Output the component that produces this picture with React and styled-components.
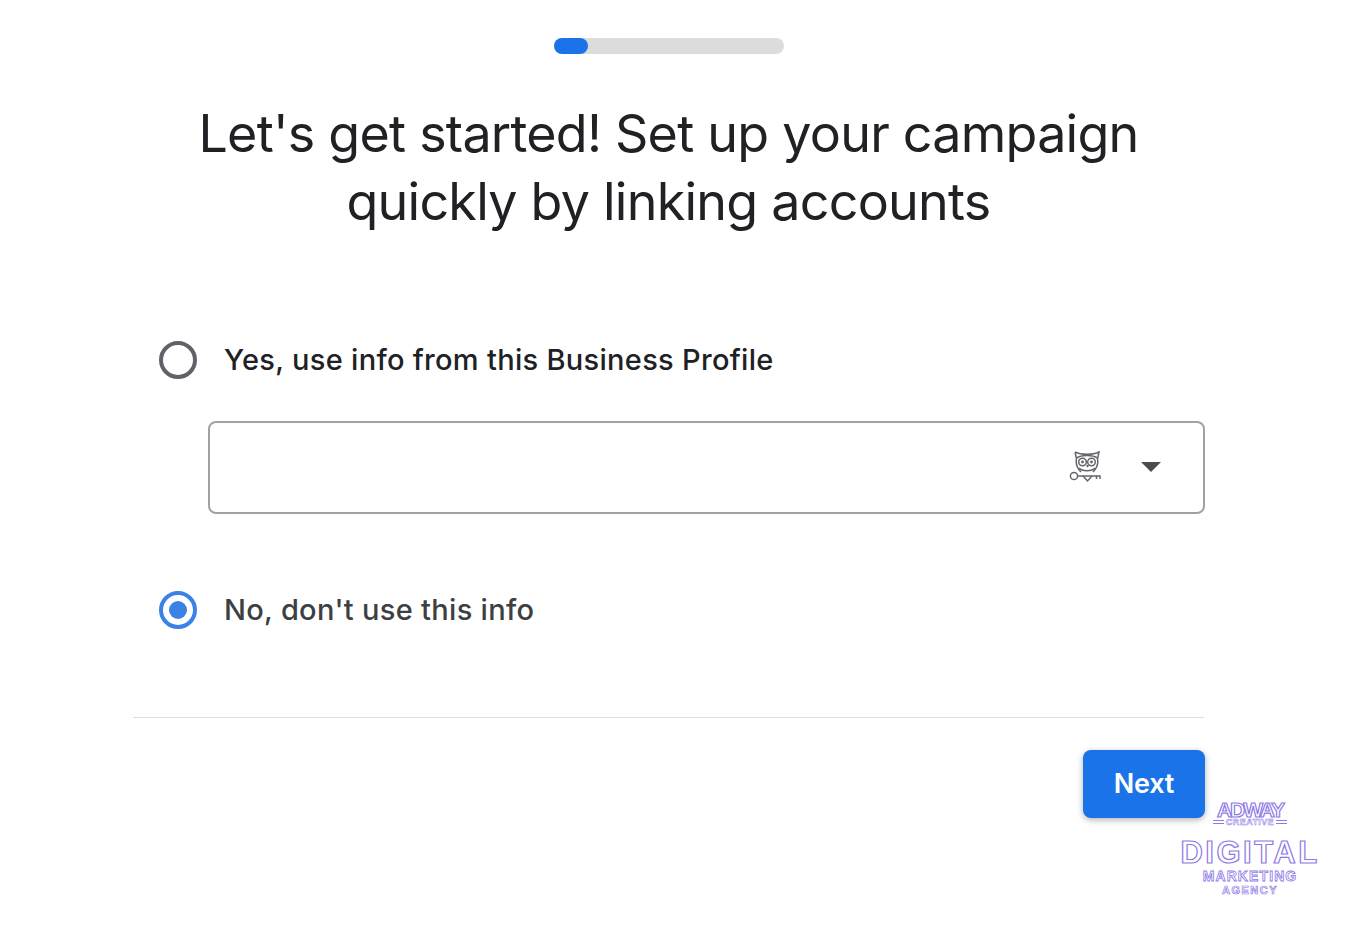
import styled, { createGlobalStyle } from "styled-components"

const Global = createGlobalStyle`
    html, body {
        margin: 0;
        background: #fff;
    }
`;

const Page = styled.div`
    position: relative;
    width: 1369px;
    height: 930px;
    overflow: hidden;
    box-sizing: border-box;
    padding: 38px 165px 0 133px;
    font-family: Inter, "Open Sans", sans-serif;
    background: #fff;
`;

const Track = styled.div`
    width: 230px;
    height: 16px;
    margin: 0 auto;
    border-radius: 8px;
    background: #dadcdd;
`;

const Fill = styled.div`
    height: 100%;
    border-radius: 8px;
    background: #1a73e8;
`;

const Title = styled.h1`
    margin: 46px 0 0;
    font-size: 52px;
    font-weight: 400;
    line-height: 68px;
    letter-spacing: -0.75px;
    text-align: center;
    color: #202124;
`;

const Form = styled.div`
    margin-top: 104px;
    padding-left: 26px;
`;

const Option = styled.div`
    display: flex;
    align-items: center;
    gap: 27px;
    height: 40px;
`;

const Radio = styled.span`
    box-sizing: border-box;
    display: flex;
    align-items: center;
    justify-content: center;
    width: 38px;
    height: 38px;
    border-radius: 50%;
    border: 4px solid ${p => (p.$checked ? "#3b82e6" : "#5f6368")};
`;

const Dot = styled.span`
    width: 18px;
    height: 18px;
    border-radius: 50%;
    background: #3b82e6;
`;

const Label = styled.span`
    padding-bottom: 2px;
    font-size: 29px;
    font-weight: 500;
    letter-spacing: 0.3px;
    color: ${p => (p.$dark ? "#202124" : "#3c4043")};
`;

const Select = styled.div`
    box-sizing: border-box;
    display: flex;
    align-items: center;
    justify-content: flex-end;
    gap: 40px;
    width: 997px;
    height: 93px;
    margin: 41px 0 76px 49px;
    padding: 0 42px 2px 0;
    border: 2px solid #a0a2a5;
    border-radius: 8px;
`;

const Caret = styled.span`
    width: 0;
    height: 0;
    border-left: 10px solid transparent;
    border-right: 10px solid transparent;
    border-top: 10px solid #4a4d52;
`;

const Divider = styled.hr`
    margin: 87px 0 0;
    border: none;
    border-top: 1.5px solid #dadce0;
`;

const Footer = styled.div`
    display: flex;
    justify-content: flex-end;
    margin: 32px -1px 0 0;
`;

const NextButton = styled.button`
    width: 122px;
    height: 68px;
    padding: 0 0 2px;
    border: none;
    border-radius: 8px;
    background: #1a73e8;
    color: #fff;
    font-family: Inter, "Open Sans", sans-serif;
    font-size: 27px;
    font-weight: 600;
    letter-spacing: -0.2px;
    box-shadow: 0 2px 6px rgba(60, 64, 67, 0.4);
`;

const Watermark = styled.div`
    position: absolute;
    left: 1150px;
    top: 801px;
    width: 200px;
    display: flex;
    flex-direction: column;
    align-items: center;
    font-family: "Liberation Sans", Arial, sans-serif;
    font-weight: 700;
    color: #fff;
    -webkit-text-stroke: 1.2px #8f78e8;
`;

const Brand = styled.span`
    font-size: 21px;
    line-height: 17px;
    letter-spacing: -2px;
`;

const BrandRow = styled.div`
    display: flex;
    align-items: center;
    gap: 2px;
`;

const BrandBar = styled.span`
    width: 11px;
    height: 2px;
    border-top: 1px solid #8f78e8;
    border-bottom: 1px solid #8f78e8;
`;

const BrandSub = styled.span`
    font-size: 9px;
    line-height: 8px;
    letter-spacing: 0.4px;
    -webkit-text-stroke-width: 0.5px;
`;

const Big = styled.span`
    margin-top: 12px;
    font-size: 31px;
    line-height: 30px;
    letter-spacing: 2.5px;
`;

const Mid = styled.span`
    margin-top: 2px;
    font-size: 14px;
    line-height: 12px;
    letter-spacing: 1.1px;
    -webkit-text-stroke-width: 0.8px;
`;

const Small = styled.span`
    margin-top: 3px;
    font-size: 11px;
    line-height: 10px;
    letter-spacing: 1.5px;
    -webkit-text-stroke-width: 0.7px;
`;

const OwlKey = () => (
  <svg width="32" height="32" viewBox="0 0 32 32" fill="none" stroke="#63666a" strokeWidth="1.5">
    <path d="M6 1 C12 4 24 4 30 1 L28.5 8 C29.5 13 27 18 24 21 M6 1 L7.5 8 C6.5 13 9 18 12 21" />
    <path d="M7.5 7 C12 3.5 24 3.5 28.5 7" />
    <circle cx="13.5" cy="11" r="3.8" />
    <circle cx="22.5" cy="11" r="3.8" />
    <circle cx="13.5" cy="11" r="0.7" />
    <circle cx="22.5" cy="11" r="0.7" />
    <path d="M18 14 L18.5 16 L19 14" />
    <path d="M10 17 C13 20.5 23 20.5 26 17" />
    <circle cx="5" cy="25" r="3.6" />
    <path d="M8.6 25 H31 V28 M27.5 25 V28" />
    <path d="M14 25 L18.5 30 L23 25" />
  </svg>
)

const App = () => {
  return (
    <Page>
      <Global />
      <Track>
        <Fill style={{ width: `${(34 / 230) * 100}%` }} />
      </Track>
      <Title>
        Let's get started! Set up your campaign
        <br />
        quickly by linking accounts
      </Title>
      <Form>
        <Option>
          <Radio />
          <Label $dark>Yes, use info from this Business Profile</Label>
        </Option>
        <Select>
          <OwlKey />
          <Caret />
        </Select>
        <Option>
          <Radio $checked>
            <Dot />
          </Radio>
          <Label>No, don't use this info</Label>
        </Option>
      </Form>
      <Divider />
      <Footer>
        <NextButton>Next</NextButton>
      </Footer>
      <Watermark>
        <Brand>ADWAY</Brand>
        <BrandRow>
          <BrandBar />
          <BrandSub>CREATIVE</BrandSub>
          <BrandBar />
        </BrandRow>
        <Big>DIGITAL</Big>
        <Mid>MARKETING</Mid>
        <Small>AGENCY</Small>
      </Watermark>
    </Page>
  )
}

export default App
